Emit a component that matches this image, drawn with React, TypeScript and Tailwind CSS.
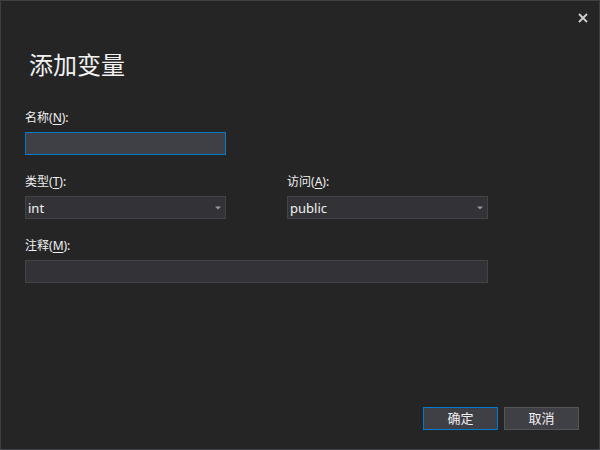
import React from 'react';

function Label({ text, accessKey }: { text: string; accessKey: string }) {
  return (
    <div className="h-4 text-[12px] leading-4 text-[#f1f1f1]">
      {text}(<span className="underline underline-offset-2">{accessKey}</span>):
    </div>
  );
}

function ComboBox({ value }: { value: string }) {
  return (
    <div className="flex h-[23px] w-[201px] items-center justify-between border border-[#434346] bg-[#333337] pl-[2px] pr-[4px]">
      <span className="text-[13px] leading-4 text-[#f1f1f1]">{value}</span>
      {/* drop arrow */}
      <svg width="6" height="4" viewBox="0 0 6 4">
        <path d="M0 0.5 H6 L3 3.5 Z" fill="#999999" />
      </svg>
    </div>
  );
}

export default function App() {
  return (
    <div
      className="relative flex h-[450px] w-[600px] flex-col border border-[#3f3f46] bg-[#252526] text-[#f1f1f1]"
      style={{ fontFamily: '"Noto Sans", "Noto Sans CJK SC", sans-serif' }}
    >
      {/* title bar */}
      <div className="flex h-[33px] justify-end pr-[10px] pt-[11px]">
        <button className="flex h-[12px] w-[12px] items-center justify-center">
          <svg width="10" height="10" viewBox="0 0 10 10">
            <path d="M1 1 L9 9 M9 1 L1 9" stroke="#d0d0d0" strokeWidth="1.8" />
          </svg>
        </button>
      </div>

      <div className="flex flex-1 flex-col px-[24px] pb-[19px]">
        <h1
          className="mt-[14px] pl-[4px] text-[24px] leading-8 font-normal"
          style={{ fontFamily: '"Noto Sans CJK SC", sans-serif' }}
        >
          添加变量
        </h1>

        <div className="mt-[30px]">
          <Label text="名称" accessKey="N" />
          <div className="mt-[6px] h-[23px] w-[201px] border border-[#007acc] bg-[#3f3f46]" />
        </div>

        <div className="mt-[19px] flex gap-[61px]">
          <div>
            <Label text="类型" accessKey="T" />
            <div className="mt-[6px]">
              <ComboBox value="int" />
            </div>
          </div>
          <div>
            <Label text="访问" accessKey="A" />
            <div className="mt-[6px]">
              <ComboBox value="public" />
            </div>
          </div>
        </div>

        <div className="mt-[19px]">
          <Label text="注释" accessKey="M" />
          <div className="mt-[6px] h-[23px] w-[463px] border border-[#434346] bg-[#333337]" />
        </div>

        <div className="-mr-[4px] mt-auto flex justify-end gap-[6px]">
          <button className="h-[23px] w-[75px] border border-[#007acc] bg-[#3f3f46] text-[13px] text-[#f1f1f1]">
            确定
          </button>
          <button className="h-[23px] w-[75px] border border-[#555555] bg-[#3f3f46] text-[13px] text-[#f1f1f1]">
            取消
          </button>
        </div>
      </div>
    </div>
  );
}
